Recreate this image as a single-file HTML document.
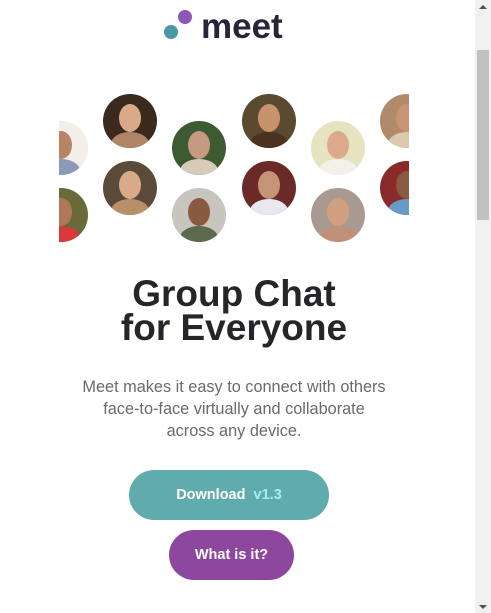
<!DOCTYPE html>
<html><head><meta charset="utf-8"><style>
html,body{margin:0;padding:0;width:491px;height:613px;overflow:hidden;background:#fff;font-family:"Liberation Sans",sans-serif}
.sb{position:absolute;left:475px;top:0;width:16px;height:613px;background:#f0f0f0}
.thumb{position:absolute;left:477px;top:50px;width:12px;height:170px;background:#c1c1c1}
.faces{position:absolute;left:59px;top:90px;width:350px;height:160px;overflow:hidden}
.f{position:absolute;width:54px;height:54px;border-radius:50%;overflow:hidden}
.f i{position:absolute;left:16px;top:10px;width:22px;height:28px;border-radius:50%}
.f b{position:absolute;left:8px;top:38px;width:38px;height:24px;border-radius:50% 50% 0 0}
h1{position:absolute;left:0;width:468px;top:277px;margin:0;text-align:center;font-size:37px;line-height:34px;font-weight:bold;color:#26262a}
p{position:absolute;left:0;width:468px;top:376px;margin:0;text-align:center;font-size:16.3px;line-height:22px;color:#6a6a6a}
.btn{position:absolute;border-radius:25px;color:#fff;font-weight:bold;font-size:14.5px;text-align:center;line-height:50px;height:50px}
</style></head><body>
<svg style="position:absolute;left:160px;top:6px" width="135" height="38">
<circle cx="25" cy="11" r="7" fill="#8b59b5"/><circle cx="11" cy="26" r="7" fill="#4b98a8"/>
<text x="41" y="32" font-family="Liberation Sans" font-weight="bold" font-size="35" fill="#262638">meet</text></svg>
<div class="faces">
<div class="f" style="left:44px;top:4px;background:#3a2a1e"><i style="background:#d9a98a"></i><b style="background:#b08466"></b></div>
<div class="f" style="left:113px;top:31px;background:#3d5a32"><i style="background:#c59a80"></i><b style="background:#d8cbb8"></b></div>
<div class="f" style="left:183px;top:4px;background:#5a4a30"><i style="background:#c8926c"></i><b style="background:#4a3220"></b></div>
<div class="f" style="left:252px;top:31px;background:#e6e4c0"><i style="background:#dba98c"></i><b style="background:#f3efea"></b></div>
<div class="f" style="left:321px;top:4px;background:#b08a6a"><i style="background:#c79474"></i><b style="background:#ddc8b0"></b></div>
<div class="f" style="left:-25px;top:31px;background:#f3eee8"><i style="background:#b88466"></i><b style="background:#8a9ab8"></b></div>
<div class="f" style="left:44px;top:71px;background:#5a4a3a"><i style="background:#d8aa88"></i><b style="background:#b89068"></b></div>
<div class="f" style="left:113px;top:98px;background:#c8c4c0"><i style="background:#8a5a40"></i><b style="background:#5a6a4a"></b></div>
<div class="f" style="left:183px;top:71px;background:#6a2a28"><i style="background:#c59478"></i><b style="background:#e8e8f0"></b></div>
<div class="f" style="left:252px;top:98px;background:#a89a90"><i style="background:#d0a080"></i><b style="background:#c09078"></b></div>
<div class="f" style="left:321px;top:71px;background:#8a2a2a"><i style="background:#8a5a44"></i><b style="background:#6a9ac8"></b></div>
<div class="f" style="left:-25px;top:98px;background:#6a6a3a"><i style="background:#b07858"></i><b style="background:#d83a3a"></b></div>
</div>
<h1>Group Chat<br>for Everyone</h1>
<p>Meet makes it easy to connect with others<br>face-to-face virtually and collaborate<br>across any device.</p>
<div class="btn" style="left:129px;top:470px;width:200px;background:#60abab">Download&nbsp; <span style="color:#9ff0f0">v1.3</span></div>
<div class="btn" style="left:169px;top:530px;width:125px;background:#8e479e">What is it?</div>
<div class="sb"></div><div class="thumb"></div>
<svg style="position:absolute;left:478px;top:3px" width="10" height="8"><path d="M1 6 L5 2 L9 6Z" fill="#505050"/></svg>
<svg style="position:absolute;left:478px;top:603px" width="10" height="8"><path d="M1 2 L5 6 L9 2Z" fill="#505050"/></svg>
</body></html>
